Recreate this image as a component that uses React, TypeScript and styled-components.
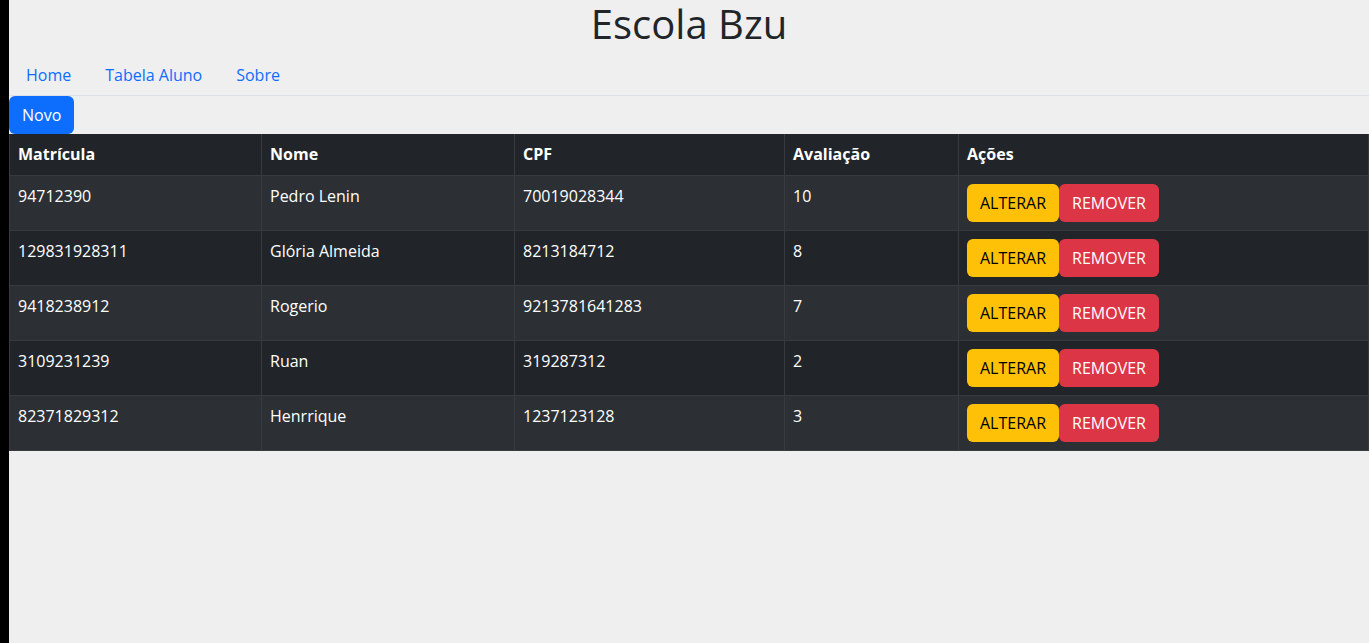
import * as React from 'react'
import styled, { createGlobalStyle } from 'styled-components'

const GlobalStyle = createGlobalStyle`
    html, body {
        margin: 0;
        padding: 0;
        background: #000;
    }
    body {
        font-family: "Open Sans", "Noto Sans", sans-serif;
        font-size: 16px;
        line-height: 1.5;
        color: #212529;
    }
    * {
        box-sizing: border-box;
    }
`

const Page = styled.div`
    margin-left: 9px;
    min-height: 100vh;
    background: #efefef;
`

const Title = styled.h1`
    margin: 0;
    padding: 0 0 7px;
    font-size: 40px;
    font-weight: 400;
    line-height: 48px;
    text-align: center;
    color: #212529;
`

const Nav = styled.nav`
    display: flex;
    border-bottom: 1px solid #dee2e6;
`

const NavLink = styled.a`
    padding: 8px 17px;
    color: #0d6efd;
    text-decoration: none;
    cursor: pointer;
`

const Toolbar = styled.div`
    display: flex;
`

const Button = styled.button<{ $variant: 'primary' | 'warning' | 'danger' }>`
    font-family: inherit;
    font-size: 16px;
    line-height: 24px;
    padding: 6px 12px;
    border: 1px solid transparent;
    border-radius: 6px;
    cursor: pointer;
    background: ${p =>
        p.$variant === 'primary' ? '#0d6efd' : p.$variant === 'warning' ? '#ffc107' : '#dc3545'};
    color: ${p => (p.$variant === 'warning' ? '#000' : '#fff')};
`

const Table = styled.table`
    width: 100%;
    border-collapse: collapse;
    color: #fff;
    background: #212529;
`

const Th = styled.th<{ $w?: number }>`
    width: ${p => (p.$w ? `${p.$w}px` : 'auto')};
    height: 41px;
    padding: 8px;
    text-align: left;
    font-weight: 700;
    border: 1px solid #373b3e;
    border-top: 0;
    vertical-align: middle;
`

const Row = styled.tr<{ $striped: boolean }>`
    background: ${p => (p.$striped ? '#2c3034' : '#212529')};
`

const Td = styled.td`
    padding: 8px;
    border: 1px solid #373b3e;
    vertical-align: top;
    height: 55px;
`

const Actions = styled.div`
    display: flex;
`

const alunos = [
    { matricula: '94712390', nome: 'Pedro Lenin', cpf: '70019028344', nota: '10' },
    { matricula: '129831928311', nome: 'Glória Almeida', cpf: '8213184712', nota: '8' },
    { matricula: '9418238912', nome: 'Rogerio', cpf: '9213781641283', nota: '7' },
    { matricula: '3109231239', nome: 'Ruan', cpf: '319287312', nota: '2' },
    { matricula: '82371829312', nome: 'Henrrique', cpf: '1237123128', nota: '3' },
]

export default function App() {
    return (
        <>
            <GlobalStyle />
            <Page>
                <Title>Escola Bzu</Title>
                <Nav>
                    <NavLink>Home</NavLink>
                    <NavLink>Tabela Aluno</NavLink>
                    <NavLink>Sobre</NavLink>
                </Nav>
                <Toolbar>
                    <Button $variant="primary">Novo</Button>
                </Toolbar>
                <Table>
                    <thead>
                        <tr>
                            <Th $w={252}>Matrícula</Th>
                            <Th $w={253}>Nome</Th>
                            <Th $w={270}>CPF</Th>
                            <Th $w={174}>Avaliação</Th>
                            <Th>Ações</Th>
                        </tr>
                    </thead>
                    <tbody>
                        {alunos.map((a, i) => (
                            <Row key={a.matricula} $striped={i % 2 === 0}>
                                <Td>{a.matricula}</Td>
                                <Td>{a.nome}</Td>
                                <Td>{a.cpf}</Td>
                                <Td>{a.nota}</Td>
                                <Td>
                                    <Actions>
                                        <Button $variant="warning">ALTERAR</Button>
                                        <Button $variant="danger">REMOVER</Button>
                                    </Actions>
                                </Td>
                            </Row>
                        ))}
                    </tbody>
                </Table>
            </Page>
        </>
    )
}
